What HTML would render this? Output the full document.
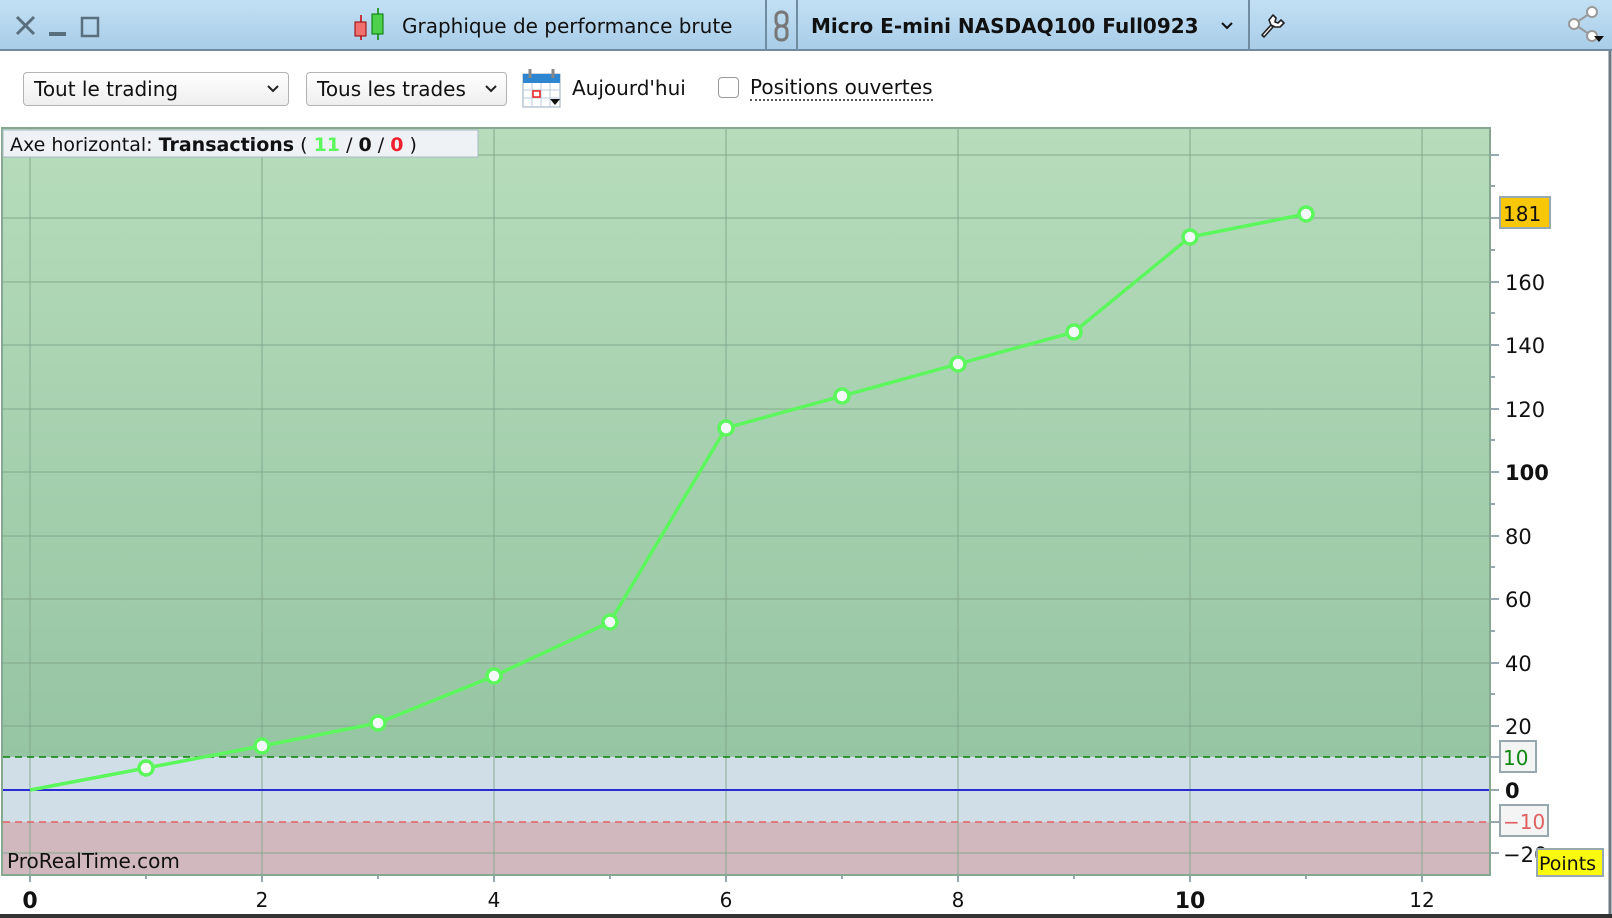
<!DOCTYPE html>
<html><head><meta charset="utf-8"><style>
html,body{margin:0;padding:0;width:1612px;height:918px;overflow:hidden;background:#fff;font-family:"DejaVu Sans","Liberation Sans",sans-serif}
.abs{position:absolute}
.sel{position:absolute;top:72px;height:34px;border:1px solid #b4b4b4;border-radius:4px;background:linear-gradient(#fff,#eee);box-sizing:border-box;font-size:20px;line-height:32px;padding-left:10px;color:#111}
.sel svg{position:absolute;right:8px;top:11px}
svg text{font-family:"DejaVu Sans","Liberation Sans",sans-serif}
</style></head><body>
<div class="abs" style="left:0;top:0;width:1612px;height:49px;background:linear-gradient(#c2e0f4,#a9cde8);border-bottom:2px solid #6f8ca0"></div>
<div class="sel" style="left:23px;width:266px">Tout le trading<svg width="14" height="10"><path d="M2 2l5 5 5-5" stroke="#222" stroke-width="2" fill="none"/></svg></div>
<div class="sel" style="left:306px;width:201px">Tous les trades<svg width="14" height="10"><path d="M2 2l5 5 5-5" stroke="#222" stroke-width="2" fill="none"/></svg></div>
<div class="abs" style="left:572px;top:76px;font-size:20px;color:#111">Aujourd'hui</div>
<div class="abs" style="left:718px;top:77px;width:21px;height:21px;border:1px solid #999;border-radius:4px;box-sizing:border-box;background:#fff"></div>
<div class="abs" style="left:750px;top:76px;font-size:20px;color:#111;border-bottom:2px dotted #555;line-height:23px">Positions ouvertes</div>
<svg class="abs" style="left:0;top:0" width="1612" height="918">
<path d="M17 17l17 17M34 17l-17 17" stroke="#5a6f7e" stroke-width="3"/>
<rect x="49" y="32" width="17" height="4" fill="#5a6f7e"/>
<rect x="82" y="18" width="16" height="18" fill="none" stroke="#5a6f7e" stroke-width="2.5"/>
<line x1="361" y1="15" x2="361" y2="40" stroke="#c00" stroke-width="1.5"/><rect x="355" y="22" width="11" height="14" fill="#f07070" stroke="#900"/>
<line x1="378" y1="8" x2="378" y2="40" stroke="#080" stroke-width="1.5"/><rect x="372" y="14" width="11" height="20" fill="#4ed24e" stroke="#070"/>
<text x="402" y="33" font-size="20" fill="#111">Graphique de performance brute</text>
<line x1="766" y1="0" x2="766" y2="49" stroke="#6f8ca0" stroke-width="2"/>
<rect x="776" y="12" width="11" height="14" rx="5" fill="none" stroke="#777" stroke-width="3"/><rect x="776" y="26" width="11" height="14" rx="5" fill="none" stroke="#777" stroke-width="3"/>
<line x1="797" y1="0" x2="797" y2="49" stroke="#6f8ca0" stroke-width="2"/>
<text x="811" y="33" font-size="20" font-weight="bold" fill="#111">Micro E-mini NASDAQ100 Full0923</text>
<path d="M1222 23l5 5 5-5" stroke="#111" stroke-width="2" fill="none"/>
<line x1="1249" y1="0" x2="1249" y2="49" stroke="#6f8ca0" stroke-width="2"/>
<path d="M1262 35l9-10 2 2-9 10z M1271 25 l-2-5 4-5 3 3-1 4 3 1 3-3 3 3-4 4-5 0z" stroke="#222" stroke-width="1.6" fill="#fff" stroke-linejoin="round"/>
<g stroke="#999" stroke-width="2" fill="#fff"><line x1="1574" y1="24" x2="1592" y2="12"/><line x1="1574" y1="24" x2="1592" y2="36"/><circle cx="1574" cy="24" r="5"/><circle cx="1592" cy="12" r="5"/><circle cx="1592" cy="36" r="5"/></g>
<path d="M1594 36h10l-5 6z" fill="#111"/>
<rect x="523" y="74" width="37" height="33" fill="#fff" stroke="#9ab"/><rect x="523" y="74" width="37" height="9" fill="#2f86d0"/>
<g stroke="#bcd" stroke-width="1"><line x1="523" y1="90" x2="560" y2="90"/><line x1="523" y1="98" x2="560" y2="98"/><line x1="532" y1="83" x2="532" y2="107"/><line x1="541" y1="83" x2="541" y2="107"/><line x1="550" y1="83" x2="550" y2="107"/></g>
<rect x="533" y="91" width="7" height="6" fill="none" stroke="#e22" stroke-width="1.5"/>
<line x1="530" y1="69" x2="530" y2="78" stroke="#888" stroke-width="3"/><line x1="553" y1="69" x2="553" y2="78" stroke="#888" stroke-width="3"/>
<path d="M550 99h10l-5 6z" fill="#111"/>
<defs><linearGradient id="g" x1="0" y1="0" x2="0" y2="1"><stop offset="0" stop-color="#b6dcbb"/><stop offset="1" stop-color="#96c5a3"/></linearGradient></defs>
<rect x="3" y="129" width="1487" height="628" fill="url(#g)"/>
<rect x="3" y="757" width="1487" height="65" fill="#d0dfe7"/>
<rect x="3" y="822" width="1487" height="53" fill="#d0b8be"/>
<g stroke="#7fa58a" stroke-opacity="0.6" stroke-width="1.5">
<line x1="3" y1="155" x2="1490" y2="155"/><line x1="3" y1="218" x2="1490" y2="218"/><line x1="3" y1="282" x2="1490" y2="282"/><line x1="3" y1="345" x2="1490" y2="345"/><line x1="3" y1="409" x2="1490" y2="409"/><line x1="3" y1="472" x2="1490" y2="472"/><line x1="3" y1="536" x2="1490" y2="536"/><line x1="3" y1="599" x2="1490" y2="599"/><line x1="3" y1="663" x2="1490" y2="663"/><line x1="3" y1="726" x2="1490" y2="726"/><line x1="3" y1="853" x2="1490" y2="853"/>
<line x1="30" y1="129" x2="30" y2="875"/><line x1="262" y1="129" x2="262" y2="875"/><line x1="494" y1="129" x2="494" y2="875"/><line x1="726" y1="129" x2="726" y2="875"/><line x1="958" y1="129" x2="958" y2="875"/><line x1="1190" y1="129" x2="1190" y2="875"/><line x1="1422" y1="129" x2="1422" y2="875"/>
</g>
<line x1="3" y1="757" x2="1490" y2="757" stroke="#0a800a" stroke-width="1.5" stroke-dasharray="7,5"/>
<line x1="3" y1="822" x2="1490" y2="822" stroke="#e06060" stroke-width="1.5" stroke-dasharray="7,5"/>
<line x1="3" y1="790" x2="1490" y2="790" stroke="#2b2bd6" stroke-width="2"/>
<rect x="2" y="128" width="1488" height="747" fill="none" stroke="#86a890" stroke-width="2"/>
<polyline points="30,790 146,768 262,746 378,723 494,676 610,622 726,428 842,396 958,364 1074,332 1190,237 1306,214" fill="none" stroke="#5cf75c" stroke-width="3.5"/>
<g fill="#f4f8fb" stroke="#5cf75c" stroke-width="3.5"><circle cx="146" cy="768" r="7"/><circle cx="262" cy="746" r="7"/><circle cx="378" cy="723" r="7"/><circle cx="494" cy="676" r="7"/><circle cx="610" cy="622" r="7"/><circle cx="726" cy="428" r="7"/><circle cx="842" cy="396" r="7"/><circle cx="958" cy="364" r="7"/><circle cx="1074" cy="332" r="7"/><circle cx="1190" cy="237" r="7"/><circle cx="1306" cy="214" r="7"/></g>
<rect x="3" y="130" width="475" height="27" fill="#eef2f5" stroke="#a8b8c4"/>
<text x="10" y="151" font-size="19" fill="#111">Axe horizontal: <tspan font-weight="bold">Transactions</tspan> ( <tspan fill="#5cf75c" font-weight="bold">11</tspan> / <tspan font-weight="bold">0</tspan> / <tspan fill="#f02030" font-weight="bold">0</tspan> )</text>
<text x="7" y="868" font-size="20" fill="#111">ProRealTime.com</text>
<g stroke="#98a8b0" stroke-width="2">
<line x1="1491" y1="155" x2="1499" y2="155"/><line x1="1491" y1="186" x2="1495" y2="186"/><line x1="1491" y1="218" x2="1499" y2="218"/><line x1="1491" y1="250" x2="1495" y2="250"/><line x1="1491" y1="282" x2="1499" y2="282"/><line x1="1491" y1="313" x2="1495" y2="313"/><line x1="1491" y1="345" x2="1499" y2="345"/><line x1="1491" y1="377" x2="1495" y2="377"/><line x1="1491" y1="409" x2="1499" y2="409"/><line x1="1491" y1="440" x2="1495" y2="440"/><line x1="1491" y1="472" x2="1499" y2="472"/><line x1="1491" y1="504" x2="1495" y2="504"/><line x1="1491" y1="536" x2="1499" y2="536"/><line x1="1491" y1="567" x2="1495" y2="567"/><line x1="1491" y1="599" x2="1499" y2="599"/><line x1="1491" y1="631" x2="1495" y2="631"/><line x1="1491" y1="663" x2="1499" y2="663"/><line x1="1491" y1="694" x2="1495" y2="694"/><line x1="1491" y1="726" x2="1499" y2="726"/><line x1="1491" y1="757" x2="1499" y2="757"/><line x1="1491" y1="790" x2="1499" y2="790"/><line x1="1491" y1="822" x2="1499" y2="822"/><line x1="1491" y1="853" x2="1499" y2="853"/>
<line x1="30" y1="876" x2="30" y2="882"/><line x1="146" y1="876" x2="146" y2="879"/><line x1="262" y1="876" x2="262" y2="882"/><line x1="378" y1="876" x2="378" y2="879"/><line x1="494" y1="876" x2="494" y2="882"/><line x1="610" y1="876" x2="610" y2="879"/><line x1="726" y1="876" x2="726" y2="882"/><line x1="842" y1="876" x2="842" y2="879"/><line x1="958" y1="876" x2="958" y2="882"/><line x1="1074" y1="876" x2="1074" y2="879"/><line x1="1190" y1="876" x2="1190" y2="882"/><line x1="1306" y1="876" x2="1306" y2="879"/><line x1="1422" y1="876" x2="1422" y2="882"/>
</g>
<g font-size="21" fill="#111">
<text x="1505" y="290">160</text><text x="1505" y="353">140</text><text x="1505" y="417">120</text><text x="1505" y="480" font-weight="bold">100</text><text x="1505" y="544">80</text><text x="1505" y="607">60</text><text x="1505" y="671">40</text><text x="1505" y="734">20</text><text x="1505" y="798" font-weight="bold">0</text><text x="1503" y="862">−20</text>
</g>
<rect x="1500" y="197" width="50" height="31" fill="#f8c808" stroke="#98a8b0" stroke-width="2"/><text x="1503" y="221" font-size="20" fill="#111">181</text>
<rect x="1500" y="741" width="36" height="31" fill="#f4f4f4" stroke="#98a8b0" stroke-width="2"/><text x="1503" y="765" font-size="20" fill="#118811">10</text>
<rect x="1500" y="805" width="48" height="31" fill="#f4f4f4" stroke="#98a8b0" stroke-width="2"/><text x="1503" y="829" font-size="20" fill="#e06060">−10</text>
<rect x="1537" y="849" width="66" height="27" fill="#fafa10" stroke="#98a8b0" stroke-width="2"/><text x="1539" y="870" font-size="19" fill="#111">Points</text>
<g font-size="20" fill="#111" text-anchor="middle">
<text x="30" y="908" font-weight="bold" font-size="22">0</text><text x="262" y="907">2</text><text x="494" y="907">4</text><text x="726" y="907">6</text><text x="958" y="907">8</text><text x="1190" y="908" font-weight="bold" font-size="22">10</text><text x="1422" y="907">12</text>
</g>
<line x1="1610" y1="51" x2="1610" y2="918" stroke="#6a7a84" stroke-width="3"/>
<line x1="0" y1="916" x2="1612" y2="916" stroke="#333" stroke-width="4"/>
</svg>
</body></html>
